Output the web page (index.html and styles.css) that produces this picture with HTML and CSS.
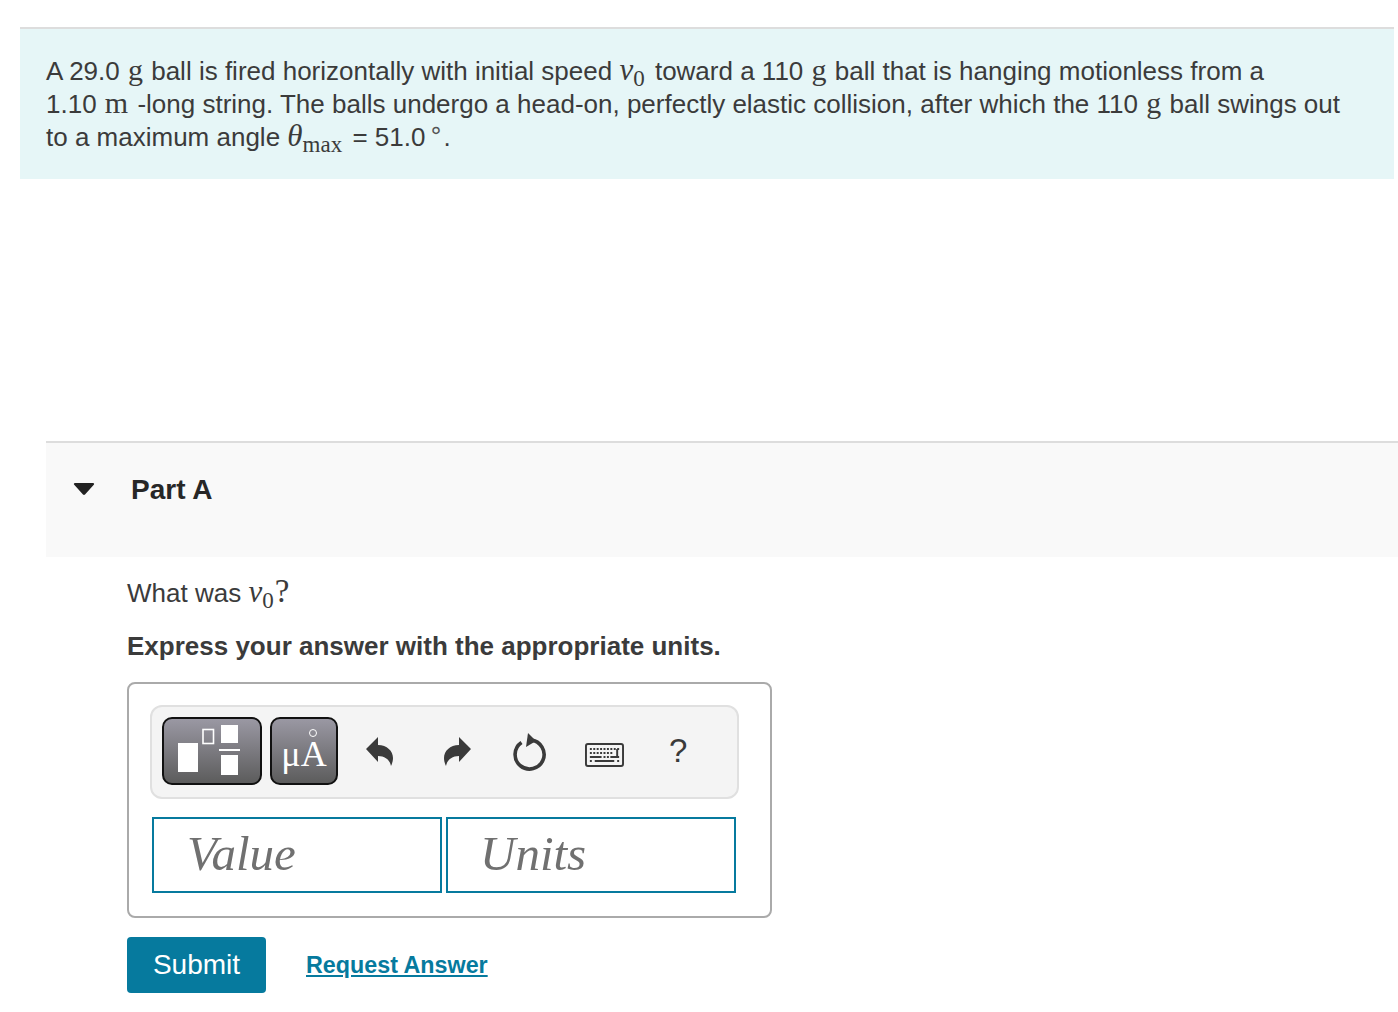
FILE: index.html
```html
<!DOCTYPE html>
<html lang="en">
<head>
  <meta charset="UTF-8">
  <title>Part A</title>
  <meta name="viewport" content="width=device-width, initial-scale=1">
  <link rel="stylesheet" href="styles.css">
</head>
<body>
  <div class="intro">
    <p>A 29.0 <span class="unit">g</span> ball is fired horizontally with initial speed <span class="math">v</span><sub class="msub">0</sub> toward a 110 <span class="unit">g</span> ball that is hanging motionless from a<br>1.10 <span class="unit unit-m">m</span> -long string. The balls undergo a head-on, perfectly elastic collision, after which the 110 <span class="unit">g</span> ball swings out<br>to a maximum angle <span class="math">θ</span><sub class="msub msub-max">max</sub> = 51.0<span class="deg">∘</span>.</p>
  </div>

  <div class="part">
    <div class="part-head">
      <svg class="caret" width="22" height="14" viewBox="0 0 22 14"><path d="M2 1h18c1 0 1.500 1 .8 1.700L12 12.500c-.6.6-1.400.6-2 0L1.200 2.700C.5 2 1 1 2 1z" fill="#222"/></svg>
      <h2>Part A</h2>
    </div>

    <div class="part-body">
      <p class="question">What was <span class="math">v</span><sub class="msub msub-q">0</sub><span class="qmark">?</span></p>
      <p class="express">Express your answer with the appropriate units.</p>

      <div class="answer">
        <div class="toolbar">
          <button class="tool tool-wide">
            <svg width="78" height="56" viewBox="0 0 78 56">
              <rect x="5" y="20" width="20" height="29" fill="#fff"/>
              <rect x="30" y="6.500" width="10.500" height="14" fill="none" stroke="#fff" stroke-width="1.600"/>
              <rect x="48" y="2" width="17" height="18" fill="#fff"/>
              <rect x="46" y="26" width="21" height="2" fill="#fff"/>
              <rect x="48" y="32" width="17" height="20" fill="#fff"/>
            </svg>
          </button>
          <button class="tool tool-unit">μ<span class="ang">A</span></button>
          <svg class="icon icon-undo" width="30" height="34" viewBox="0 0 30 34"><path d="M1 15 13 3v8c9 0 15 6 15 13 0 3-1 6-2 8-1-6-6-10-13-10v6z" fill="#3a3a3a"/></svg>
          <svg class="icon icon-redo" width="30" height="34" viewBox="0 0 30 34"><path d="M29 15 17 3v8C8 11 2 17 2 24c0 3 1 6 2 8 1-6 6-10 13-10v6z" fill="#3a3a3a"/></svg>
          <svg class="icon icon-reset" width="36" height="40" viewBox="0 0 36 40"><path d="M9.500 11.500A14.500 14.500 0 1 0 19 9.100" fill="none" stroke="#3a3a3a" stroke-width="3.600"/><path d="M16 2l8 8-10 6z" fill="#3a3a3a"/></svg>
          <svg class="icon icon-keys" width="39" height="24" viewBox="0 0 40 24" preserveAspectRatio="none">
            <rect x="1" y="1" width="38" height="22" rx="2" fill="#f4f4f4" stroke="#3a3a3a" stroke-width="2"/>
            <path d="M5 6h2M8.500 6h2M12 6h2M15.500 6h2M19 6h2M22.500 6h2M26 6h2M29.500 6h2M33 6h2M5 10h2M8.500 10h2M12 10h2M15.500 10h2M19 10h2M22.500 10h2M26 10h2M33 6v8M5 14h12M19 14h2M22.500 14h2M26 14h9M5 18h2M10 18h20M33 18h2" stroke="#3a3a3a" stroke-width="2" fill="none"/>
          </svg>
          <span class="help">?</span>
        </div>
        <div class="inputs">
          <div class="field">Value</div>
          <div class="field field-units">Units</div>
        </div>
      </div>

      <div class="actions">
        <button class="submit">Submit</button>
        <a class="request" href="#">Request Answer</a>
      </div>
    </div>
  </div>
</body>
</html>
```

FILE: styles.css
```css
body {
  margin: 0;
  padding-top: 27px;
  font-family: "Liberation Sans", Arial, sans-serif;
  color: #3b3b3b;
  background: #fff;
  overflow: hidden;
}
p {
  margin: 0;
}
.intro {
  margin: 0 4px 0 20px;
  height: 150px;
  background: #e6f6f7;
  border-top: 2px solid #ddd;
  padding: 0 26px;
  font-size: 26px;
  line-height: 33px;
}
.intro p {
  padding-top: 26px;
  white-space: nowrap;
}
.unit {
  font-family: "Liberation Serif", serif;
  font-size: 30px;
  line-height: 0;
  margin: 0 1px;
}
.unit-m {
  letter-spacing: 2px;
  margin-right: 0;
}
.math {
  font-family: "Liberation Serif", serif;
  font-style: italic;
  font-size: 31px;
  line-height: 0;
}
.msub {
  font-family: "Liberation Serif", serif;
  font-size: 23px;
  line-height: 0;
  vertical-align: -6px;
  margin-right: 3px;
}
.msub-q {
  margin-right: 1px;
}
.deg {
  font-family: "DejaVu Sans", sans-serif;
  font-size: 24px;
  line-height: 0;
  vertical-align: 8px;
  color: #555;
  margin-left: 3px;
}
.part {
  margin: 262px 0 0 46px;
}
.part-head {
  display: flex;
  align-items: flex-start;
  height: 114px;
  background: #f9f9f9;
  border-top: 2px solid #ddd;
}
.caret {
  margin: 39px 0 0 27px;
}
.part-head h2 {
  margin: 30px 0 0 36px;
  font-size: 28px;
  line-height: 34px;
  color: #272727;
}
.part-body {
  padding: 20px 0 0 81px;
}
.question {
  font-size: 26px;
  line-height: 33px;
}
.qmark {
  font-family: "Liberation Serif", serif;
  font-size: 33px;
  line-height: 0;
}
.express {
  margin-top: 20px;
  font-size: 26px;
  line-height: 33px;
  font-weight: bold;
}
.answer {
  box-sizing: border-box;
  width: 645px;
  height: 236px;
  margin-top: 19px;
  padding: 21px 21px 0;
  border: 2px solid #aaa;
  border-radius: 8px;
}
.toolbar {
  box-sizing: border-box;
  display: flex;
  align-items: center;
  width: 589px;
  height: 94px;
  padding: 0 0 2px 10px;
  background: #f4f4f4;
  border: 2px solid #e0e0e0;
  border-radius: 12px;
}
.tool {
  box-sizing: border-box;
  display: flex;
  align-items: center;
  justify-content: center;
  height: 68px;
  padding: 0;
  background: linear-gradient(#9a98a3, #5c5c5c);
  border: 2px solid #111;
  border-radius: 10px;
  color: #fff;
}
.tool-wide {
  width: 100px;
}
.tool-unit {
  width: 68px;
  margin-left: 8px;
  font-family: "Liberation Serif", serif;
  font-size: 36px;
  padding-top: 6px;
}
.ang {
  position: relative;
}
.ang::before {
  content: "";
  position: absolute;
  top: -4px;
  left: 50%;
  width: 6px;
  height: 6px;
  margin-left: -5px;
  border: 1.500px solid #fff;
  border-radius: 50%;
}
.icon {
  flex: none;
}
.icon-undo {
  margin-left: 27px;
}
.icon-redo {
  margin-left: 47px;
}
.icon-reset {
  margin-left: 40px;
}
.icon-keys {
  margin-left: 37px;
  margin-top: 8px;
}
.help {
  margin-left: 45px;
  font-size: 33px;
  color: #3a3a3a;
}
.inputs {
  display: flex;
  gap: 4px;
  margin: 18px 0 0 2px;
}
.field {
  box-sizing: border-box;
  width: 290px;
  height: 76px;
  padding-left: 33px;
  border: 2px solid #067a9e;
  font-family: "Liberation Serif", serif;
  font-style: italic;
  font-size: 49px;
  line-height: 70px;
  color: #707070;
}
.field-units {
  padding-left: 32px;
}
.actions {
  display: flex;
  align-items: center;
  gap: 40px;
  margin-top: 19px;
}
.submit {
  width: 139px;
  height: 56px;
  padding: 0;
  background: #067a9e;
  border: 0;
  border-radius: 4px;
  color: #fff;
  font-family: inherit;
  font-size: 28px;
}
.request {
  font-size: 23.300px;
  font-weight: bold;
  color: #067a9e;
}
```
